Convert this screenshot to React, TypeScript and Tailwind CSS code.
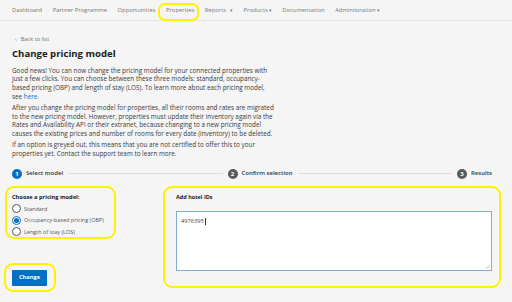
import React from "react";

const navItems = [
  { label: "Dashboard" },
  { label: "Partner Programme" },
  { label: "Opportunities" },
  { label: "Properties" },
  { label: "Reports", caret: true, spaced: true },
  { label: "Products", caret: true },
  { label: "Documentation" },
  { label: "Administration", caret: true },
];

const options = ["Standard", "Occupancy-based pricing (OBP)", "Length of stay (LOS)"];

const Step = ({ n, label, active }: { n: number; label: string; active?: boolean }) => (
  <div className="flex items-center gap-[4px] shrink-0">
    <span
      className={`w-[10px] h-[10px] rounded-full flex items-center justify-center text-[6px] font-bold text-white leading-none ${
        active ? "bg-[#0071c2]" : "bg-[#5a5a5a]"
      }`}
    >
      {n}
    </span>
    <span className="text-[6px] font-semibold text-[#333]">{label}</span>
  </div>
);

export default function App() {
  return (
    <div className="relative w-[512px] h-[302px] overflow-hidden bg-[#f5f5f5] text-[#333] font-['Open_Sans','Noto_Sans',sans-serif]">
      {/* top nav */}
      <nav className="h-[21px] border-b border-[#e3e3e3] flex items-center gap-[10.5px] pl-[12px] text-[5.85px] text-[#777]">
        {navItems.map((item) => (
          <span key={item.label} className="whitespace-nowrap">
            {item.label}
            {item.caret && <span className={`text-[4.5px] ${item.spaced ? "ml-[4px]" : "ml-[1px]"}`}>▾</span>}
          </span>
        ))}
      </nav>

      <main className="pl-[12px] pr-[20px]">
        <div className="mt-[13px] pl-[3px] flex items-center gap-[4px] text-[5.7px] leading-[10px] text-[#707070]">
          <span>&lsaquo;</span>
          <span>Back to list</span>
        </div>
        <h1 className="mt-[3px] text-[9.6px] leading-[13px] font-bold text-[#1a1a1a]">Change pricing model</h1>

        <div className="mt-[6.5px] text-[6.35px] leading-[8.7px] text-[#3a3a3a] whitespace-nowrap">
          <p className="mb-[2.6px]">
            Good news! You can now change the pricing model for your connected properties with
            <br />
            just a few clicks. You can choose between these three models: standard, occupancy-
            <br />
            based pricing (OBP) and length of stay (LOS). To learn more about each pricing model,
            <br />
            see <span className="text-[#0071c2]">here</span>.
          </p>
          <p className="mb-[2.6px]">
            After you change the pricing model for properties, all their rooms and rates are migrated
            <br />
            to the new pricing model. However, properties must update their inventory again via the
            <br />
            Rates and Availability API or their extranet, because changing to a new pricing model
            <br />
            causes the existing prices and number of rooms for every date (inventory) to be deleted.
          </p>
          <p>
            If an option is greyed out, this means that you are not certified to offer this to your
            <br />
            properties yet. Contact the support team to learn more.
          </p>
        </div>

        {/* stepper */}
        <div className="mt-[10px] flex items-center h-[10px]">
          <Step n={1} label="Select model" active />
          <div className="flex-1 h-px bg-[#dddddd] mx-[5px]" />
          <Step n={2} label="Confirm selection" />
          <div className="flex-1 h-px bg-[#dddddd] mx-[5px]" />
          <Step n={3} label="Results" />
        </div>

        <div className="mt-[13px] flex">
          <div className="w-[164px] shrink-0">
            <div className="text-[5.7px] leading-[10px] font-bold text-[#1a1a1a]">Choose a pricing model:</div>
            <div className="mt-[2.5px] flex flex-col gap-[2.5px]">
              {options.map((opt, i) => (
                <label key={opt} className="flex items-center gap-[3px] h-[9px] text-[5.5px] text-[#555]">
                  <span
                    className={`w-[9px] h-[9px] rounded-full border flex items-center justify-center bg-white ${
                      i === 1 ? "border-[#0071c2]" : "border-[#555]"
                    }`}
                  >
                    {i === 1 && <span className="w-[5px] h-[5px] rounded-full bg-[#0071c2]" />}
                  </span>
                  {opt}
                </label>
              ))}
            </div>
            <button className="mt-[33.5px] w-[35px] h-[16px] bg-[#0071c2] text-white text-[5.7px] font-bold rounded-[1px]">
              Change
            </button>
          </div>

          <div className="flex-1">
            <div className="text-[5.5px] leading-[10px] font-bold text-[#1a1a1a]">Add hotel IDs</div>
            <div className="relative mt-[9px] h-[60px] bg-white border border-[#7eaed6] px-[4px] py-[5px] text-[5.7px] leading-[8px] text-[#444]">
              4976395<span className="inline-block w-px h-[7px] bg-[#333] align-middle ml-[1px]" />
              <svg className="absolute right-[1px] bottom-[1px] w-[5px] h-[5px]" viewBox="0 0 5 5">
                <path d="M4.5 1 L1 4.5 M4.5 3 L3 4.5" stroke="#999" strokeWidth="0.6" fill="none" />
              </svg>
            </div>
          </div>
        </div>
      </main>

      {/* yellow highlight annotations */}
      <div className="absolute left-[158px] top-[3px] w-[41px] h-[18px] border-2 border-[#fff200] rounded-[7px]" />
      <div className="absolute left-[5px] top-[186px] w-[111px] h-[53px] border-2 border-[#fff200] rounded-[9px]" />
      <div className="absolute left-[163px] top-[186px] w-[338px] h-[102px] border-2 border-[#fff200] rounded-[9px]" />
      <div className="absolute left-[4px] top-[263px] w-[52px] h-[29px] border-2 border-[#fff200] rounded-[9px]" />
    </div>
  );
}
